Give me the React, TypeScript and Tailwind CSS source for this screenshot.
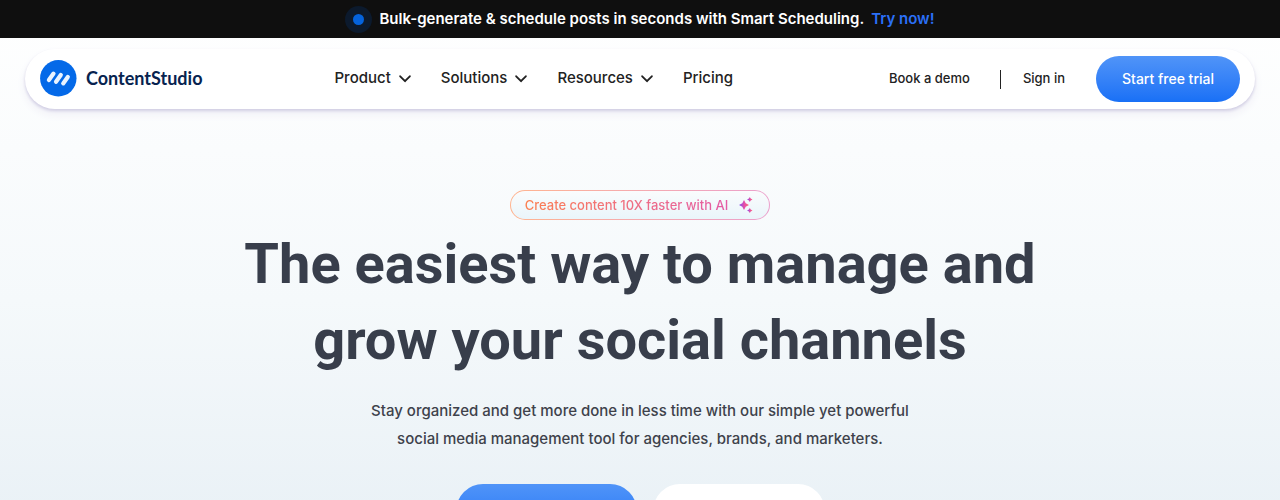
import React from 'react';

const menuItems = [
  { label: 'Product', hasMenu: true },
  { label: 'Solutions', hasMenu: true },
  { label: 'Resources', hasMenu: true },
  { label: 'Pricing', hasMenu: false },
];

const Chevron: React.FC = () => (
  <svg className="mt-0.5 h-2 w-3" viewBox="0 0 12 8" fill="none" aria-hidden="true">
    <path d="M1.2 1.3 6 6.2l4.8-4.9" stroke="#222" strokeWidth="1.9" strokeLinecap="round" strokeLinejoin="round" />
  </svg>
);

const Sparkles: React.FC = () => (
  <svg className="h-4 w-4" viewBox="0 0 16 16" aria-hidden="true">
    <defs>
      <linearGradient id="sparkle" x1="0" y1="0" x2="1" y2="0">
        <stop offset="0" stopColor="#7c4df0" />
        <stop offset="0.55" stopColor="#e84fa6" />
        <stop offset="1" stopColor="#fb6b74" />
      </linearGradient>
    </defs>
    <path fill="url(#sparkle)" d="M6 3 7.7 6.3 11 8 7.7 9.7 6 13 4.3 9.7 1 8l3.3-1.7z" />
    <path fill="url(#sparkle)" d="m11.8 0 .9 1.6 1.8.9-1.8.9-.9 1.6-.9-1.6-1.8-.9 1.8-.9z" />
    <path fill="url(#sparkle)" d="m11.8 11 .9 1.6 1.8.9-1.8.9-.9 1.6-.9-1.6-1.8-.9 1.8-.9z" />
  </svg>
);

const Banner: React.FC = () => (
  <div className="flex h-[38px] items-center justify-center bg-[#0f0f0f] text-[15px] font-semibold text-white">
    <span className="mr-[7px] flex h-[27px] w-[27px] items-center justify-center rounded-full bg-[#0c1a2d]">
      <span className="h-[11px] w-[11px] rounded-full bg-[#0563dc]"></span>
    </span>
    <p>Bulk-generate &amp; schedule posts in seconds with Smart Scheduling.</p>
    <a href="#try" className="ml-[7px] text-[#2b70f7]">Try now!</a>
  </div>
);

const Logo: React.FC = () => (
  <a href="#home" className="flex items-center gap-[9px]">
    <svg className="h-[37px] w-[37px]" viewBox="0 0 37 37" aria-hidden="true">
      <circle cx="18.3" cy="18.3" r="18.2" fill="#0469e8" />
      <g stroke="#eaf3ff" strokeWidth="4.2" strokeLinecap="round">
        <path d="m8.9 20 4.6-6.4" />
        <path d="m16 21.8 4.8-6.8" />
        <path d="m23.2 23.4 4.6-6.4" />
      </g>
    </svg>
    <span className="font-[Lato,sans-serif] text-[18px] font-bold text-[#07234f]">ContentStudio</span>
  </a>
);

const Header: React.FC = () => (
  <header className="mx-[25px] mt-[11px] flex h-[60px] items-center justify-between rounded-full bg-white px-[15px] pb-0.5 text-[#222] shadow-[0_2px_3px_#d2cfe4,0_5px_10px_#efeef6]">
    <div className="flex items-center gap-[132px]">
      <Logo />
      <nav className="flex items-center gap-[30px] text-[15px] font-medium">
        {menuItems.map((item) =>
          item.hasMenu ? (
            <button key={item.label} type="button" className="flex items-center gap-2">
              {item.label}
              <Chevron />
            </button>
          ) : (
            <a key={item.label} href="#pricing">{item.label}</a>
          )
        )}
      </nav>
    </div>
    <div className="flex items-center pt-0.5 text-[13px] font-medium">
      <a href="#demo">Book a demo</a>
      <span className="mr-[22px] ml-[30px] h-[19px] w-px bg-[#222]"></span>
      <a href="#signin">Sign in</a>
      <button type="button" className="ml-[31px] h-[46px] w-36 rounded-full bg-linear-to-b from-[#5094f8] to-[#1870f6] text-sm font-medium text-white">
        Start free trial
      </button>
    </div>
  </header>
);

const Hero: React.FC = () => (
  <section className="mt-[81px] flex flex-col items-center pb-16 text-center">
    {/* Gradient outline around the pill */}
    <div className="rounded-full bg-linear-to-r from-[#ffb48f] to-[#eba0cc] p-px">
      <div className="flex h-7 items-center gap-2.5 rounded-full bg-linear-to-b from-[#fafcfd] to-[#eaf5fa] pr-[15px] pl-[14px]">
        <span className="bg-linear-to-r from-[#fb7e4e] to-[#e45ba5] bg-clip-text pt-px text-[13px] font-medium text-transparent">
          Create content 10X faster with AI
        </span>
        <Sparkles />
      </div>
    </div>
    <h1 className="mt-1.5 font-[Roboto,sans-serif] text-[56px] leading-[76px] font-bold text-[#383e4b]">
      The easiest way to manage and
      <br />
      grow your social channels
    </h1>
    <p className="mt-[19px] text-[15px] leading-7 font-medium text-[#3e424b]">
      Stay organized and get more done in less time with our simple yet powerful
      <br />
      social media management tool for agencies, brands, and marketers.
    </p>
    <div className="mt-[31px] flex gap-4">
      <button type="button" aria-label="Start free trial" className="h-[54px] w-[181px] rounded-full bg-linear-to-b from-[#5094f8] to-[#1870f6]"></button>
      <button type="button" aria-label="Book a demo" className="h-[54px] w-[172px] rounded-full bg-white"></button>
    </div>
  </section>
);

const App: React.FC = () => {
  return (
    <main className="min-h-screen bg-linear-to-b from-white via-[#f5f9fb] via-50% to-[#e5eef4] font-[Inter,sans-serif]">
      <Banner />
      <div className="flow-root">
        <Header />
        <Hero />
      </div>
    </main>
  );
};

export default App;
